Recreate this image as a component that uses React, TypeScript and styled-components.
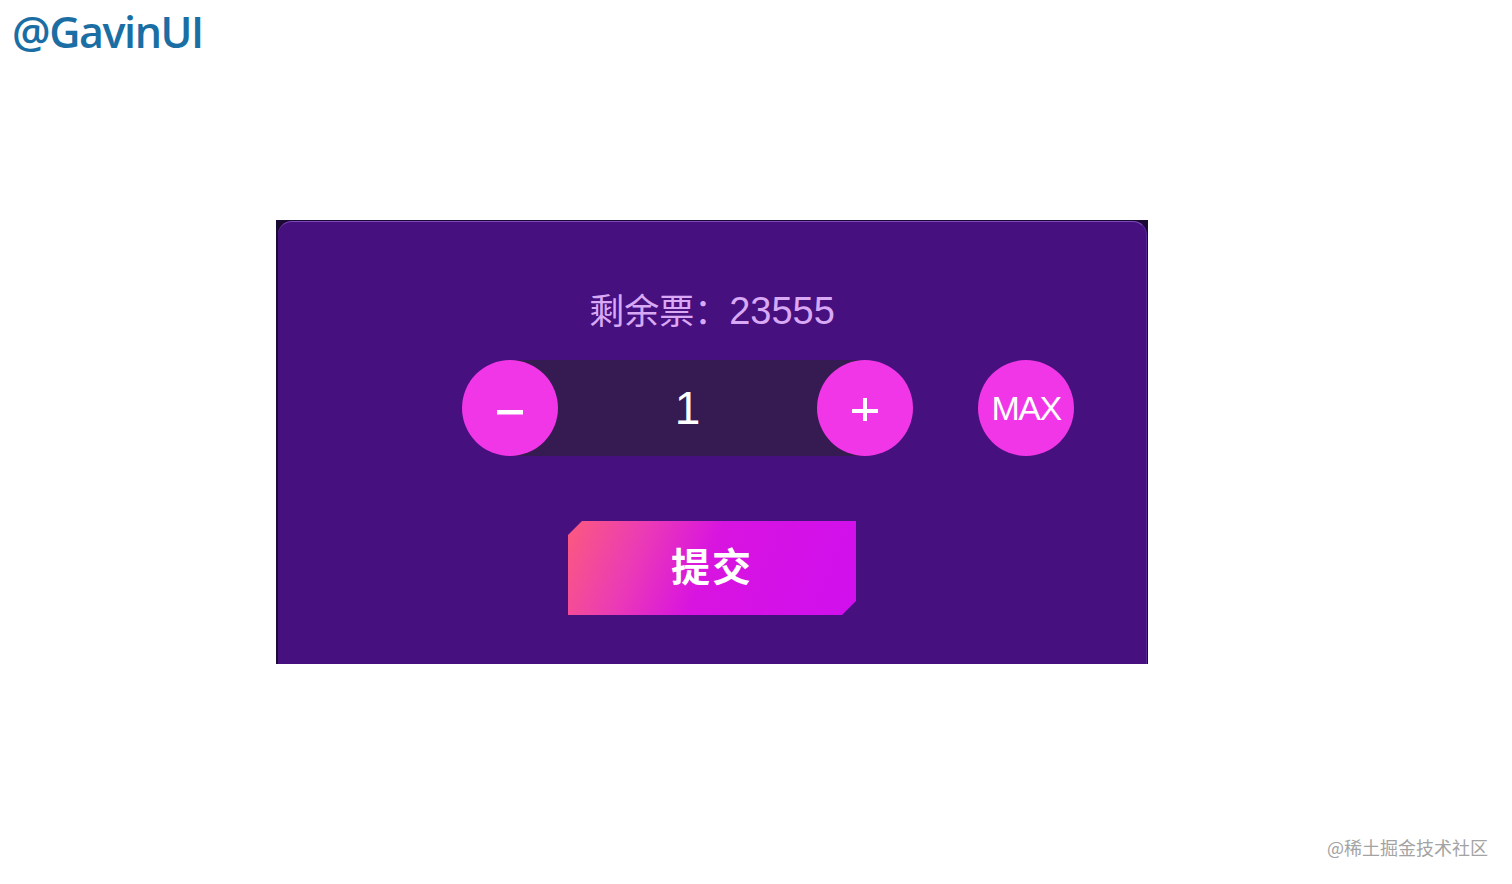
import React, { useState } from "react";
import styled, { createGlobalStyle } from "styled-components";

const GlobalStyle = createGlobalStyle`
  html, body {
    margin: 0;
    padding: 0;
    background: #ffffff;
  }
  body {
    font-family: "Noto Sans", "Noto Sans CJK SC", sans-serif;
  }
`;

const Page = styled.div`
  position: relative;
  width: 1512px;
  height: 884px;
  overflow: hidden;
`;

const Logo = styled.div`
  padding: 2px 0 0 12px;
  height: 58px;
  font-family: "Open Sans", "Noto Sans", sans-serif;
  font-size: 43px;
  font-weight: 600;
  letter-spacing: -1.4px;
  color: #1b6ea4;
  line-height: 60px;
`;

const Stage = styled.div`
  padding: 160px 0 0 276px;
`;

const Frame = styled.div`
  width: 872px;
  height: 444px;
  background: #1b0a33;
  padding: 1px 1px 0 2px;
  box-sizing: border-box;
`;

const Panel = styled.div`
  height: 100%;
  box-sizing: border-box;
  background: #46107e;
  border-top: 1px solid #7c48b8;
  border-right: 1px solid #5a2898;
  border-radius: 14px 14px 0 0;
  display: flex;
  flex-direction: column;
  align-items: center;
  padding-top: 69px;
`;

const Remaining = styled.div`
  height: 40px;
  font-size: 35px;
  line-height: 40px;
  color: #d9a9f6;
  font-family: "Liberation Sans", "Noto Sans CJK SC", sans-serif;
`;

const Count = styled.span`
  font-size: 38px;
`;

const Row = styled.div`
  align-self: stretch;
  display: flex;
  align-items: center;
  gap: 65px;
  margin-top: 29px;
  padding-left: 184px;
`;

const Stepper = styled.div`
  width: 451px;
  height: 96px;
  display: flex;
  align-items: center;
  background: linear-gradient(
    to right,
    transparent 48px,
    #361a52 48px,
    #361a52 calc(100% - 48px),
    transparent calc(100% - 48px)
  );
`;

const Circle = styled.button`
  width: 96px;
  height: 96px;
  flex: none;
  border: none;
  border-radius: 50%;
  background: #f036e6;
  color: #ffffff;
  display: flex;
  align-items: center;
  justify-content: center;
  padding: 0;
  cursor: pointer;
  font-family: "Liberation Sans", sans-serif;
  font-size: 34px;
  letter-spacing: -1.5px;
`;

const Value = styled.div`
  flex: 1;
  text-align: center;
  color: #ffffff;
  font-family: "Liberation Sans", sans-serif;
  font-size: 46px;
  line-height: 1;
`;

const Submit = styled.button`
  margin-top: 65px;
  width: 288px;
  height: 94px;
  border: none;
  padding: 0 0 8px;
  line-height: 1;
  color: #ffffff;
  font-family: "Noto Sans CJK SC", sans-serif;
  font-size: 39px;
  font-weight: 700;
  letter-spacing: 2px;
  cursor: pointer;
  background: linear-gradient(112deg, #fb5a7e 0%, #ec3cb4 24%, #d814e0 48%, #d00fee 100%);
  clip-path: polygon(14px 0, 100% 0, 100% calc(100% - 14px), calc(100% - 14px) 100%, 0 100%, 0 14px);
`;

const Watermark = styled.div`
  position: absolute;
  right: 24px;
  bottom: 24px;
  font-family: "Noto Sans CJK SC", sans-serif;
  font-size: 18px;
  color: #a3a3a3;
`;

const MinusIcon = () => (
  <svg width="26" height="26" viewBox="0 0 26 26">
    <rect x="0" y="15" width="26" height="4.5" fill="#ffffff" />
  </svg>
);

const PlusIcon = () => (
  <svg width="26" height="26" viewBox="0 0 26 26">
    <rect x="0" y="14" width="26" height="4" fill="#ffffff" />
    <rect x="11" y="3" width="4" height="26" fill="#ffffff" />
  </svg>
);

const TOTAL = 23555;

const App = () => {
  const [count, setCount] = useState(1);

  return (
    <Page>
      <GlobalStyle />
      <Logo>@GavinUI</Logo>
      <Stage>
        <Frame>
          <Panel>
            <Remaining>
              剩余票：<Count>{TOTAL}</Count>
            </Remaining>
            <Row>
              <Stepper>
                <Circle onClick={() => setCount((c) => Math.max(1, c - 1))}>
                  <MinusIcon />
                </Circle>
                <Value>{count}</Value>
                <Circle onClick={() => setCount((c) => Math.min(TOTAL, c + 1))}>
                  <PlusIcon />
                </Circle>
              </Stepper>
              <Circle onClick={() => setCount(TOTAL)}>MAX</Circle>
            </Row>
            <Submit>提交</Submit>
          </Panel>
        </Frame>
      </Stage>
      <Watermark>@稀土掘金技术社区</Watermark>
    </Page>
  );
};

export default App;
